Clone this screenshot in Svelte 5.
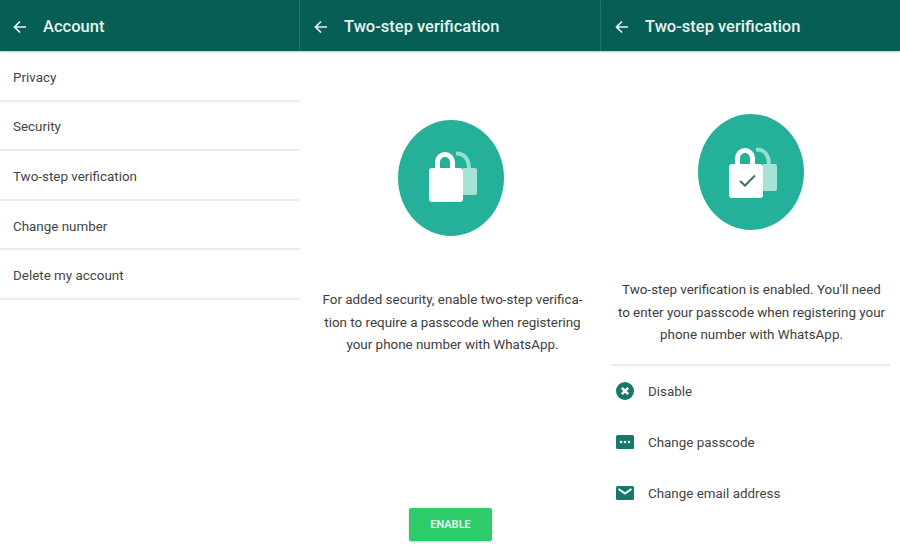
<script lang="ts">
  const rows = ['Privacy', 'Security', 'Two-step verification', 'Change number', 'Delete my account'];
</script>

{#snippet lock(done: boolean)}
  <svg class="lock" viewBox="0 0 106 116" aria-hidden="true">
    <g transform={done ? 'translate(0 2)' : undefined}>
      <path d="M58 33.5 C66 33 71 39 71 49" fill="none" stroke="#93e0cf" stroke-width="4" />
      <path d="M65 48 H77 Q79 48 79 50 V73 Q79 75 77 75 H65 Z" fill="#a5e3d5" />
      <path d="M39.5 49 V42 A7.5 7.5 0 0 1 54.5 42 V49" fill="none" stroke="#fff" stroke-width="5" />
      <rect x="31" y="48" width="34" height="34" rx="3" fill="#fff" />
      {#if done}
        <path d="M42 65 L47 69.5 L57 59.5" fill="none" stroke="#3f6f66" stroke-width="2" />
      {/if}
    </g>
  </svg>
{/snippet}

<main class="screens">
  <section class="panel">
    <header class="bar">
      <svg class="back" viewBox="0 0 16 16" aria-hidden="true"><path d="M14 8H3M8 2.5 2.5 8 8 13.5" /></svg>
      <h1>Account</h1>
    </header>
    <ul class="rows">
      {#each rows as row}
        <li>{row}</li>
      {/each}
    </ul>
  </section>

  <section class="panel mid">
    <header class="bar">
      <svg class="back" viewBox="0 0 16 16" aria-hidden="true"><path d="M14 8H3M8 2.5 2.5 8 8 13.5" /></svg>
      <h1>Two-step verification</h1>
    </header>
    <div class="badge first">{@render lock(false)}</div>
    <p class="copy first-copy">For added security, enable two-step verifica-<br />tion to require a passcode when registering<br />your phone number with WhatsApp.</p>
    <button class="enable">ENABLE</button>
  </section>

  <section class="panel last">
    <header class="bar">
      <svg class="back" viewBox="0 0 16 16" aria-hidden="true"><path d="M14 8H3M8 2.5 2.5 8 8 13.5" /></svg>
      <h1>Two-step verification</h1>
    </header>
    <div class="badge second">{@render lock(true)}</div>
    <p class="copy second-copy">Two-step verification is enabled. You'll need<br />to enter your passcode when registering your<br />phone number with WhatsApp.</p>
    <ul class="actions">
      <li>
        <svg viewBox="0 0 18 18" aria-hidden="true">
          <circle cx="9" cy="9" r="9" fill="#14796b" />
          <path d="M5.8 5.8l6.4 6.4M12.2 5.8l-6.4 6.4" stroke="#fff" stroke-width="2.6" />
        </svg>
        Disable
      </li>
      <li>
        <svg viewBox="0 0 18 18" aria-hidden="true">
          <rect y="2" width="18" height="14" rx="1.5" fill="#14796b" />
          <circle cx="5" cy="9" r="1.3" fill="#fff" /><circle cx="9" cy="9" r="1.3" fill="#fff" /><circle cx="13" cy="9" r="1.3" fill="#fff" />
        </svg>
        Change passcode
      </li>
      <li>
        <svg viewBox="0 0 18 18" aria-hidden="true">
          <rect y="2" width="18" height="14" rx="1.5" fill="#14796b" />
          <path d="M2.5 5 9 9.5 15.5 5" fill="none" stroke="#fff" stroke-width="2" />
        </svg>
        Change email address
      </li>
    </ul>
  </section>
</main>

<style>
  :global(body) { margin: 0; background: #fff; }
  .screens {
    width: 900px; height: 560px;
    display: grid; grid-template-columns: 300px 301px 299px;
    font-family: Roboto, "Liberation Sans", sans-serif;
    color: #444;
    overflow: hidden;
  }
  .panel { display: flex; flex-direction: column; align-items: center; min-width: 0; }
  .bar {
    box-sizing: border-box;
    align-self: stretch;
    height: 51px;
    padding-top: 2px;
    background: #075e54;
    display: flex; align-items: center;
    border-right: 1px solid #2b7a70;
    box-shadow: 0 1px 2px rgba(0,0,0,.25);
  }
  .last .bar { border-right: 0; }
  .back {
    width: 16px; height: 16px; margin-left: 12px;
    fill: none; stroke: #e8f3f1; stroke-width: 1.7;
  }
  .bar h1 {
    margin: 0 0 0 15px;
    font-size: 16.5px; font-weight: 500;
    color: #e8f3f1;
  }
  .mid .back, .last .back { margin-left: 13px; }
  .rows { list-style: none; margin: 1px 0 0; padding: 0; align-self: stretch; }
  .rows li {
    box-sizing: border-box;
    height: 49.6px;
    padding: 3px 0 0 13px;
    display: flex; align-items: center;
    font-size: 13.4px;
    border-bottom: 2px solid #ececec;
  }
  .badge {
    width: 106px; height: 116px;
    border-radius: 50%;
    background: #25b09a;
  }
  .badge.first { margin-top: 69px; }
  .badge.second { margin-top: 63px; }
  .lock { display: block; width: 100%; height: 100%; }
  .copy {
    margin: 0;
    font-size: 13.4px; line-height: 22.5px;
    text-align: center;
    color: #3d3d3d;
    white-space: nowrap;
  }
  .first-copy { margin-top: 53px; padding-left: 4px; }
  .second-copy { margin-top: 49px; padding-left: 2px; }
  .enable {
    margin-top: auto; margin-bottom: 19px;
    width: 83px; height: 33px;
    border: 0; border-radius: 2px;
    background: #2ecb6b;
    color: #d8f7e4;
    font: 700 11px Roboto, "Liberation Sans", sans-serif;
    box-shadow: 0 1px 2px rgba(0,0,0,.2);
  }
  .actions {
    list-style: none; margin: 17px 0 0; padding: 0 10px;
    align-self: stretch;
  }
  .actions::before {
    content: ''; display: block; height: 2px; background: #ececec;
  }
  .actions li {
    height: 51px;
    display: flex; align-items: center; gap: 14px;
    padding-left: 5px;
    font-size: 13.4px;
  }
  .actions svg { width: 18px; height: 18px; flex: none; }
</style>
